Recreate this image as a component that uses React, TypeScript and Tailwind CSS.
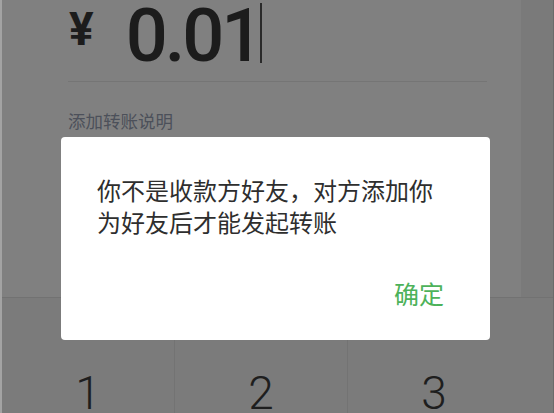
import React from "react";

export default function App() {
  const cjk = { fontFamily: '"Noto Sans CJK SC", "Noto Sans", sans-serif' };
  return (
    <div className="relative w-[554px] h-[413px] overflow-hidden bg-[#7f7f7f] flex">
      <div className="w-[2px] bg-[#a3a3a3]" />
      <div className="flex-1 flex flex-col">
        <div className="h-[297px] flex">
          <div className="flex-1 flex flex-col pl-[66px] pr-[34px] bg-[#808080]">
            <div className="h-[82px] flex items-start border-b border-[#757575]">
              <div
                className="flex items-start text-[#1c1c1c]"
                style={{ fontFamily: 'Roboto, "DejaVu Sans", sans-serif' }}
              >
                <span className="text-[46px] font-bold leading-none mt-[6px] ml-[1px]">¥</span>
                <span className="text-[74px] font-medium leading-none tracking-[-3px] ml-[32px] mt-[-1px]">
                  0.01
                </span>
                <span className="w-[2px] h-[60px] bg-[#2a2a2a] mt-[3px] ml-[0px]" />
              </div>
            </div>
            <div
              className="mt-[27px] text-[17.5px] leading-[24px] text-[#4c505a]"
              style={cjk}
            >
              添加转账说明
            </div>
          </div>
          <div className="w-[32px] bg-[#7a7a7a]" />
        </div>
        <div className="h-[1px] bg-[#727272]" />
        <div className="flex-1 flex bg-[#7b7b7b]">
          {["1", "2", "3"].map((d, i) => (
            <div
              key={d}
              className={
                i === 2
                  ? "w-[172px] flex justify-center pt-[78px]"
                  : "w-[173px] flex justify-center pt-[78px] border-r border-[#737373]"
              }
            >
              <span
                className="text-[46px] font-light leading-[34px] text-[#1e1e1e]"
                style={{ fontFamily: 'Roboto, "DejaVu Sans", sans-serif' }}
              >
                {d}
              </span>
            </div>
          ))}
          <div className="flex-1" />
        </div>
      </div>
      <div className="w-[1px] bg-[#6a6a6a]" />

      <div className="absolute left-[61px] top-[137px] w-[429px] h-[203px] bg-white rounded-[4px] flex flex-col">
        <div
          className="pl-[36px] pr-[30px] pt-[37px] text-[24px] leading-[32px] text-[#2e2e2e]"
          style={cjk}
        >
          <div>你不是收款方好友，对方添加你</div>
          <div>为好友后才能发起转账</div>
        </div>
        <div className="flex-1" />
        <div className="flex justify-end pr-[46px] pb-[32px]">
          <span className="text-[25px] leading-[30px] text-[#4db25a]" style={cjk}>
            确定
          </span>
        </div>
      </div>
    </div>
  );
}
